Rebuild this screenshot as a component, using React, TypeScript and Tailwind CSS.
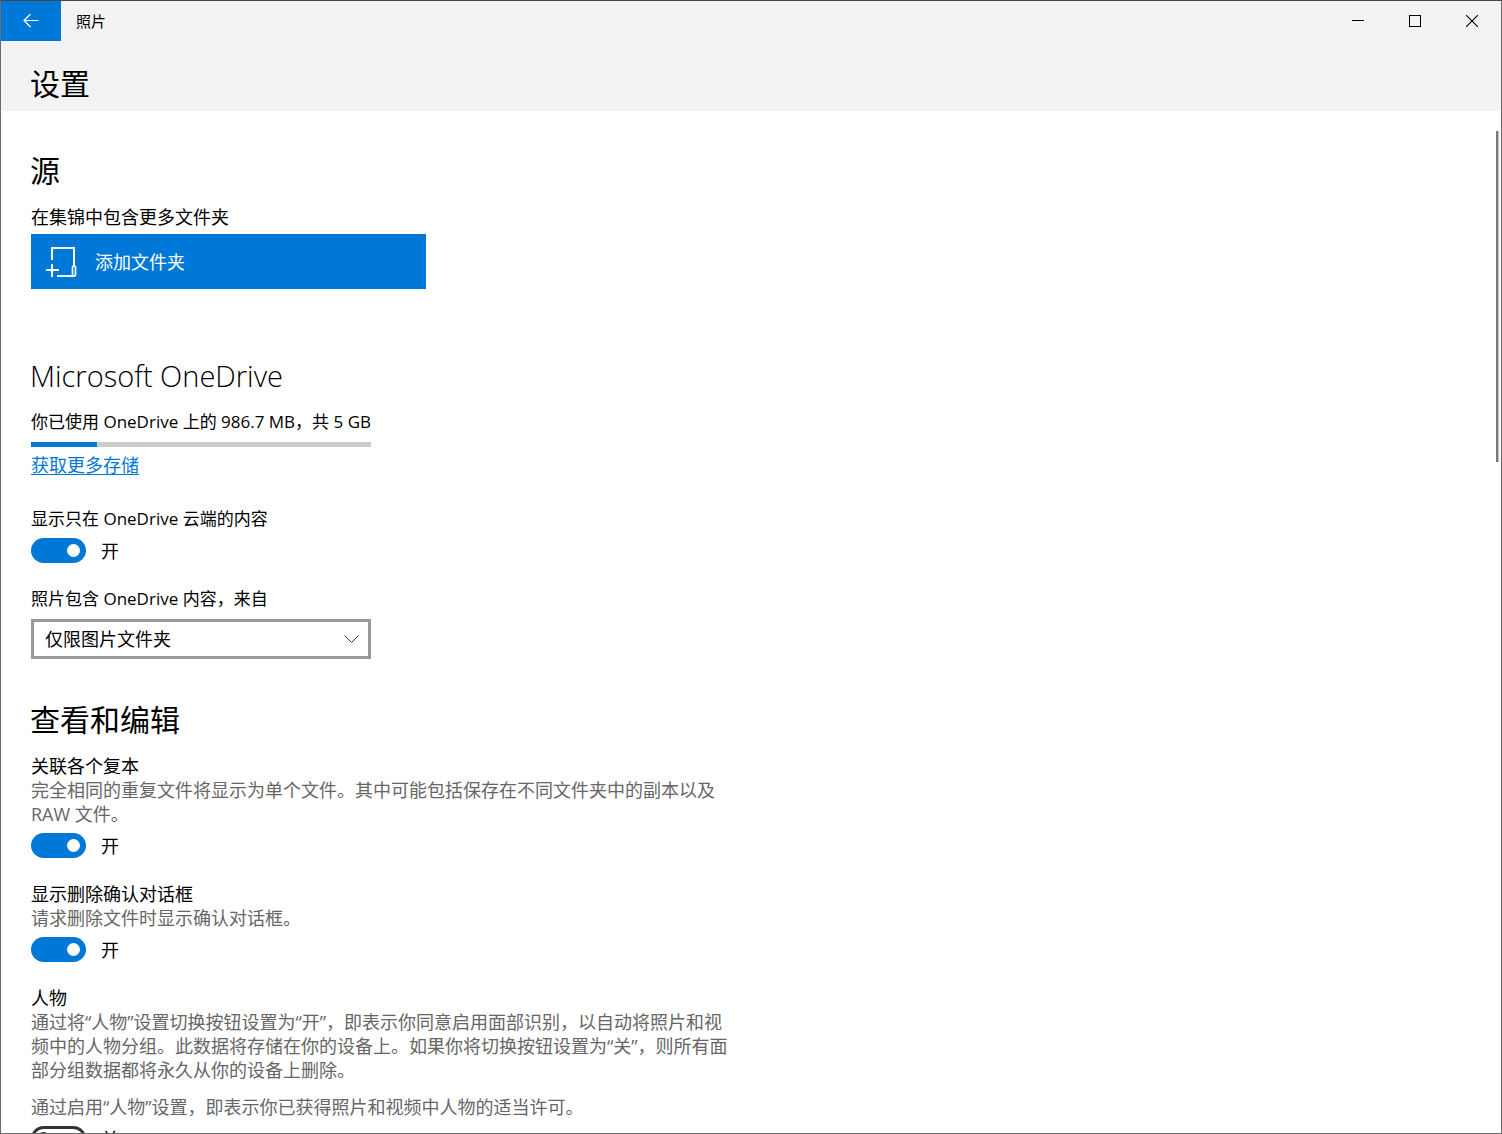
import { useId, useState } from "react";
import type { ReactNode } from "react";

function Heading({ children }: { children: ReactNode }) {
  return <h2 className="-ml-px mb-3.5 text-[30px] leading-10 font-normal text-black">{children}</h2>;
}

function Description({ children }: { children: ReactNode }) {
  return <p className="text-[#666666]">{children}</p>;
}

type ToggleSettingProps = {
  title: string;
  defaultOn?: boolean;
  children?: ReactNode;
};

function ToggleSetting({ title, defaultOn = false, children }: ToggleSettingProps) {
  const [on, setOn] = useState(defaultOn);
  const id = useId();
  return (
    <div>
      <label htmlFor={id} className="block">
        {title}
      </label>
      {children}
      <div className="mt-[7px] flex h-[25px] items-center gap-[15px] text-[18px]">
        <input
          id={id}
          type="checkbox"
          role="switch"
          checked={on}
          onChange={(e) => setOn(e.target.checked)}
          className="flex h-[25px] w-[55px] shrink-0 appearance-none items-center rounded-full border-[3px] border-[#333333] px-[3px] before:block before:size-[13px] before:rounded-full before:bg-[#333333] checked:justify-end checked:border-[#0078d7] checked:bg-[#0078d7] checked:before:bg-white"
        />
        <span>{on ? "开" : "关"}</span>
      </div>
    </div>
  );
}

function TitleBar() {
  return (
    <header className="h-[110px] shrink-0 bg-[#f3f3f3]">
      <div className="flex h-10 items-center">
        <button aria-label="返回" className="flex h-10 w-[60px] items-center justify-center bg-[#0078d7]">
          <svg width="16" height="14" viewBox="0 0 16 14" fill="none" stroke="white" strokeWidth="1.2">
            <path d="M15.5 6.500H1M7.500 0L1 6.500l6.500 6.500" />
          </svg>
        </button>
        <span className="ml-[15px] flex-1 text-[15px]">照片</span>
        <div className="mr-px flex h-full">
          <button aria-label="最小化" className="flex w-[57px] items-center justify-center">
            <svg width="12" height="12" viewBox="0 0 12 12" stroke="black" shapeRendering="crispEdges">
              <path d="M0 5.5h12" />
            </svg>
          </button>
          <button aria-label="最大化" className="flex w-[57px] items-center justify-center">
            <svg width="12" height="12" viewBox="0 0 12 12" fill="none" stroke="black" shapeRendering="crispEdges">
              <rect x="0.5" y="0.5" width="11" height="11" />
            </svg>
          </button>
          <button aria-label="关闭" className="flex w-[57px] items-center justify-center">
            <svg width="12" height="12" viewBox="0 0 12 12" stroke="black" strokeWidth="1.1">
              <path d="M0 0l12 12M12 0L0 12" />
            </svg>
          </button>
        </div>
      </div>
      <h1 className="mt-[23px] ml-[29px] text-[30px] leading-10">设置</h1>
    </header>
  );
}

export default function App() {
  return (
    <div
      lang="zh-CN"
      className="flex h-screen flex-col overflow-hidden border border-[#6b6b6b] border-t-[#484848] bg-white text-[18px] leading-6 text-black [font-family:'Open_Sans','Noto_Sans_CJK_SC',sans-serif]"
    >
      <TitleBar />
      <div className="relative min-h-0 flex-1">
        <main className="h-full overflow-hidden pt-10 pl-[30px]">
          <section>
            <Heading>源</Heading>
            <p>在集锦中包含更多文件夹</p>
            <button className="mt-[5px] flex h-[55px] w-full max-w-[395px] items-center gap-[17px] bg-[#0078d7] pl-[15px] text-white">
              <svg width="32" height="32" viewBox="0 0 32 32" fill="none" stroke="white" strokeWidth="2">
                <path d="M6 14V2h22v18" />
                <path d="M0 24h13M6 18v13" />
                <path d="M11 30h18" />
                <path d="M28 30a1.500 1.500 0 0 1-1.500-1.500V21.500a1.500 1.500 0 0 1 3 0v7a1.500 1.500 0 0 1-1.500 1.500z" strokeWidth="1.700" />
              </svg>
              添加文件夹
            </button>
          </section>

          <section className="mt-[67px] text-[17px]">
            <h2 className="-ml-px mb-3.5 text-[29px] leading-10 font-light">Microsoft OneDrive</h2>
            <p>你已使用 OneDrive 上的 986.7 MB，共 5 GB</p>
            <div
              role="progressbar"
              aria-label="OneDrive 存储"
              aria-valuenow={19}
              aria-valuemin={0}
              aria-valuemax={100}
              className="mt-2 h-[5px] w-full max-w-[340px] bg-[#cccccc]"
            >
              <div className="h-full bg-[#0078d7]" style={{ width: "19.4%" }} />
            </div>
            <a
              href="#storage"
              className="mt-1.5 mb-[30px] block w-fit text-[18px] text-[#0078d7] underline underline-offset-2"
            >
              获取更多存储
            </a>
            <ToggleSetting title="显示只在 OneDrive 云端的内容" defaultOn />
            <label htmlFor="onedrive-source" className="mt-6 block">
              照片包含 OneDrive 内容，来自
            </label>
            <div className="relative mt-2 max-w-[340px] text-[18px]">
              <select
                id="onedrive-source"
                className="block h-10 w-full appearance-none border-[3px] border-[#999999] bg-white pl-[11px]"
              >
                <option>仅限图片文件夹</option>
                <option>所有文件夹</option>
              </select>
              <svg
                className="pointer-events-none absolute top-4 right-3"
                width="15"
                height="9"
                viewBox="0 0 15 9"
                fill="none"
                stroke="#333333"
              >
                <path d="M0.500 0.500l7 7 7-7" />
              </svg>
            </div>
          </section>

          <section className="mt-[41px]">
            <Heading>查看和编辑</Heading>
            <div className="flex max-w-[700px] flex-col gap-6">
              <ToggleSetting title="关联各个复本" defaultOn>
                <Description>
                  完全相同的重复文件将显示为单个文件。其中可能包括保存在不同文件夹中的副本以及 RAW 文件。
                </Description>
              </ToggleSetting>
              <ToggleSetting title="显示删除确认对话框" defaultOn>
                <Description>请求删除文件时显示确认对话框。</Description>
              </ToggleSetting>
              <ToggleSetting title="人物">
                <div className="flex flex-col gap-[13px]">
                  <Description>
                    通过将“人物”设置切换按钮设置为“开”，即表示你同意启用面部识别，以自动将照片和视频中的人物分组。此数据将存储在你的设备上。如果你将切换按钮设置为“关”，则所有面部分组数据都将永久从你的设备上删除。
                  </Description>
                  <Description>通过启用“人物”设置，即表示你已获得照片和视频中人物的适当许可。</Description>
                </div>
              </ToggleSetting>
            </div>
          </section>
        </main>
        <div className="absolute top-5 right-[2px] h-[331px] w-[3px] border-r border-[#c0c0c0] bg-[#7a7a7a]" />
      </div>
    </div>
  );
}
